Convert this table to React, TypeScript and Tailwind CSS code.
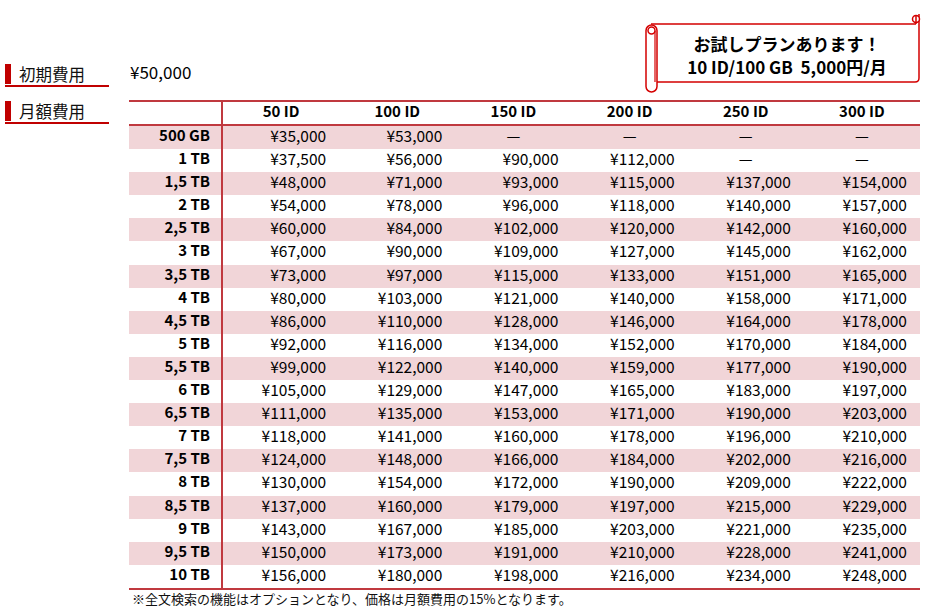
import React from "react";

const columns = ["50 ID", "100 ID", "150 ID", "200 ID", "250 ID", "300 ID"];

const rows: [string, string[]][] = [
  ["500 GB", ["35,000", "53,000", "", "", "", ""]],
  ["1 TB", ["37,500", "56,000", "90,000", "112,000", "", ""]],
  ["1,5 TB", ["48,000", "71,000", "93,000", "115,000", "137,000", "154,000"]],
  ["2 TB", ["54,000", "78,000", "96,000", "118,000", "140,000", "157,000"]],
  ["2,5 TB", ["60,000", "84,000", "102,000", "120,000", "142,000", "160,000"]],
  ["3 TB", ["67,000", "90,000", "109,000", "127,000", "145,000", "162,000"]],
  ["3,5 TB", ["73,000", "97,000", "115,000", "133,000", "151,000", "165,000"]],
  ["4 TB", ["80,000", "103,000", "121,000", "140,000", "158,000", "171,000"]],
  ["4,5 TB", ["86,000", "110,000", "128,000", "146,000", "164,000", "178,000"]],
  ["5 TB", ["92,000", "116,000", "134,000", "152,000", "170,000", "184,000"]],
  ["5,5 TB", ["99,000", "122,000", "140,000", "159,000", "177,000", "190,000"]],
  ["6 TB", ["105,000", "129,000", "147,000", "165,000", "183,000", "197,000"]],
  ["6,5 TB", ["111,000", "135,000", "153,000", "171,000", "190,000", "203,000"]],
  ["7 TB", ["118,000", "141,000", "160,000", "178,000", "196,000", "210,000"]],
  ["7,5 TB", ["124,000", "148,000", "166,000", "184,000", "202,000", "216,000"]],
  ["8 TB", ["130,000", "154,000", "172,000", "190,000", "209,000", "222,000"]],
  ["8,5 TB", ["137,000", "160,000", "179,000", "197,000", "215,000", "229,000"]],
  ["9 TB", ["143,000", "167,000", "185,000", "203,000", "221,000", "235,000"]],
  ["9,5 TB", ["150,000", "173,000", "191,000", "210,000", "228,000", "241,000"]],
  ["10 TB", ["156,000", "180,000", "198,000", "216,000", "234,000", "248,000"]],
];

const SectionLabel = ({ text }: { text: string }) => (
  <div className="flex items-stretch w-[104px] border-b-2 border-[#c00000]">
    <span className="w-[6px] bg-[#c00000] my-[1px]" />
    <span className="pl-[8px] text-[16.5px] leading-[22px] text-[#111]">{text}</span>
  </div>
);

const Scroll = () => (
  <div className="relative w-[280px] h-[86px] -mr-[3px]">
    <svg className="absolute inset-0" width="280" height="86" viewBox="0 0 280 86" fill="none">
      <path d="M8 14 H276 V68 Q276 72 272 72 H13 Z" fill="#fff" />
      <path d="M8 14 H273 M276 4 V68 Q276 72 272 72 H13" stroke="#d40000" strokeWidth="1.5" />
      <circle cx="273" cy="9" r="3.5" stroke="#d40000" strokeWidth="1.5" fill="#fff" />
      <line x1="273" y1="5" x2="273" y2="14" stroke="#d40000" strokeWidth="1.5" />
      <rect x="3" y="15" width="11" height="67" rx="5.5" stroke="#d40000" strokeWidth="1.5" fill="#fff" />
      <circle cx="8.5" cy="20.5" r="3.5" stroke="#d40000" strokeWidth="1.5" fill="#fff" />
      <line x1="12" y1="21" x2="12" y2="72" stroke="#d40000" strokeWidth="1.2" />
    </svg>
    <div className="relative flex flex-col items-center pl-[8px] pt-[22px] text-[17px] font-bold leading-[23px] text-black">
      <span>お試しプランあります！</span>
      <span className="whitespace-pre">10 ID/100 GB  5,000円/月</span>
    </div>
  </div>
);

const App: React.FC = () => {
  return (
    <div className="w-[936px] h-[611px] bg-white font-['Noto_Sans_CJK_JP','Noto_Sans',sans-serif] text-black overflow-hidden">
      <div className="grid grid-cols-[129px_1fr] pt-[10px] pr-[16px]">
        <div className="flex items-end pl-[5px] pb-[13px]">
          <SectionLabel text="初期費用" />
        </div>
        <div className="flex items-start justify-between h-[90px]">
          <span className="mt-[51px] ml-[1px] text-[17px] leading-[22px]">¥50,000</span>
          <Scroll />
        </div>

        <div className="pl-[5px]">
          <SectionLabel text="月額費用" />
        </div>
        <div>
          <div className="border-y-2 border-[#c0393f]">
            <div className="grid grid-cols-[94px_repeat(6,1fr)] h-[22px] text-[15px] font-bold leading-[18px]">
              <div className="border-r-2 border-[#c0393f]" />
              {columns.map((c) => (
                <div key={c} className="text-center">
                  {c}
                </div>
              ))}
            </div>
          </div>
          <div className="border-b-2 border-[#c0393f]">
            {rows.map(([label, values], i) => (
              <div
                key={label}
                className={
                  "grid grid-cols-[94px_repeat(6,1fr)] h-[23.1px] text-[15.5px] leading-[18px] " +
                  (i % 2 === 0 ? "bg-[#f1d5d8]" : "bg-white")
                }
              >
                <div className="border-r-2 border-[#c0393f] text-right pr-[11px] font-bold text-[15px]">{label}</div>
                {values.map((v, j) =>
                  v ? (
                    <div key={j} className="text-right pr-[13px]">
                      ¥{v}
                    </div>
                  ) : (
                    <div key={j} className="text-center">
                      —
                    </div>
                  )
                )}
              </div>
            ))}
          </div>
          <p className="pl-[3px] text-[13px] leading-[18px] text-[#111]">
            ※全文検索の機能はオプションとなり、価格は月額費用の15%となります。
          </p>
        </div>
      </div>
    </div>
  );
};

export default App;
